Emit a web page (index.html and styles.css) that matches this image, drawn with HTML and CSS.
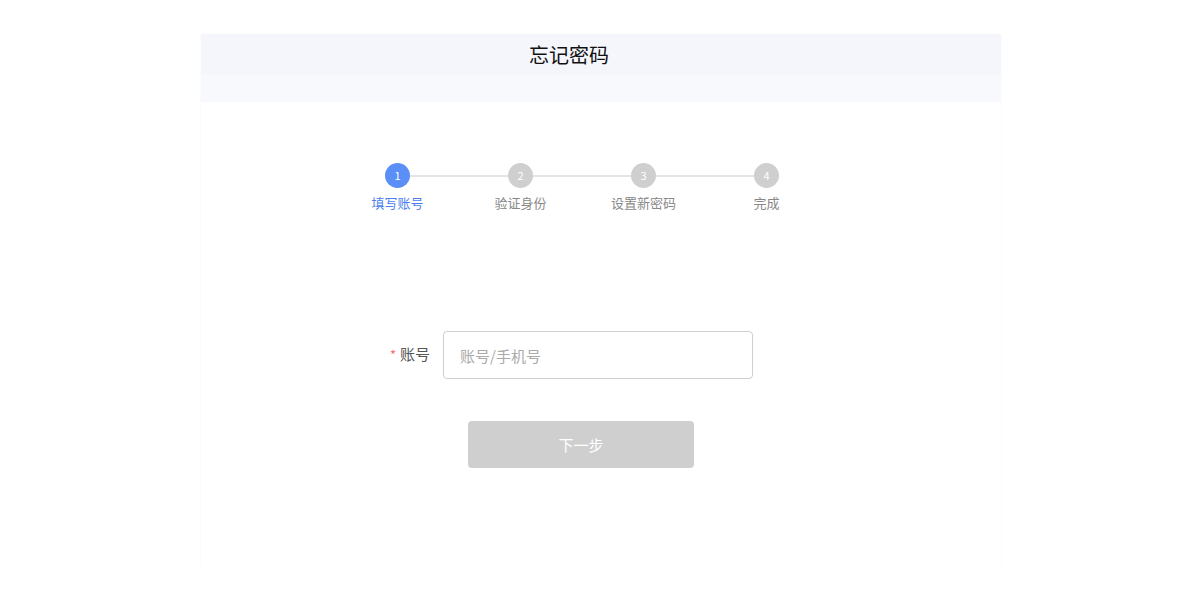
FILE: index.html
```html
<!DOCTYPE html>
<html lang="zh-CN">
<head>
    <meta charset="UTF-8">
    <title>忘记密码</title>
    <link rel="stylesheet" href="styles.css">
</head>
<body>
    <div class="card">
        <div class="header">
            <div class="header-top"><h1>忘记密码</h1></div>
            <div class="header-bottom"></div>
        </div>

        <div class="steps">
            <div class="step active">
                <span class="dot">1</span>
                <span class="name">填写账号</span>
            </div>
            <div class="step">
                <span class="dot">2</span>
                <span class="name">验证身份</span>
            </div>
            <div class="step">
                <span class="dot">3</span>
                <span class="name">设置新密码</span>
            </div>
            <div class="step">
                <span class="dot">4</span>
                <span class="name">完成</span>
            </div>
        </div>

        <form class="form">
            <div class="form-row">
                <label for="account"><span class="req">*</span>账号</label>
                <input id="account" type="text" placeholder="账号/手机号">
            </div>
            <button type="button" class="next" disabled>下一步</button>
        </form>
    </div>
</body>
</html>
```

FILE: styles.css
```css
:root {
    --primary: #5b8ef6;
    --muted: #cfcfcf;
    --text: #333;
}

* {
    box-sizing: border-box;
}

body {
    margin: 0;
    font-family: "Noto Sans CJK SC", "Noto Sans", sans-serif;
    background: #fff;
    color: var(--text);
}

.card {
    width: 800px;
    height: 533px;
    margin: 34px 0 0 201px;
    background: #fff;
    box-shadow: 0 0 2px rgba(0, 0, 0, 0.04);
}

.header-top {
    height: 41px;
    background: #f5f6fc;
    padding-left: 328px;
}

.header-top h1 {
    margin: 0;
    font-size: 20px;
    font-weight: 400;
    line-height: 41px;
    color: #111;
}

.header-bottom {
    height: 27px;
    background: #f7f9fd;
}

.steps {
    display: flex;
    margin: 61px 0 0 135px;
}

.step {
    position: relative;
    width: 123px;
    display: flex;
    flex-direction: column;
    align-items: center;
}

.step + .step::before {
    content: "";
    position: absolute;
    top: 12px;
    right: 50%;
    width: 123px;
    height: 2px;
    background: #e4e4e4;
}

.dot {
    position: relative;
    z-index: 1;
    width: 25px;
    height: 25px;
    border-radius: 50%;
    background: var(--muted);
    color: #fff;
    font-size: 11px;
    line-height: 25px;
    text-align: center;
}

.name {
    margin-top: 5px;
    font-size: 13px;
    color: #888;
}

.step.active .dot {
    background: var(--primary);
}

.step.active .name {
    color: #4a7ef0;
}

.form {
    margin-top: 119px;
}

.form-row {
    display: flex;
    align-items: center;
}

.form-row label {
    width: 242px;
    padding-right: 13px;
    padding-bottom: 4px;
    text-align: right;
    font-size: 15px;
    color: #555;
}

.req {
    color: #f56c6c;
    font-size: 13px;
    margin-right: 4px;
}

.form-row input {
    width: 310px;
    height: 48px;
    padding: 0 16px;
    border: 1px solid #cfcfcf;
    border-radius: 4px;
    font-family: inherit;
    font-size: 15px;
    color: var(--text);
    outline: none;
}

.form-row input::placeholder {
    color: #aaa;
}

.next {
    display: block;
    width: 226px;
    height: 47px;
    margin: 42px 0 0 267px;
    border: none;
    border-radius: 4px;
    background: var(--muted);
    color: #fff;
    font-family: inherit;
    font-size: 15px;
}
```
